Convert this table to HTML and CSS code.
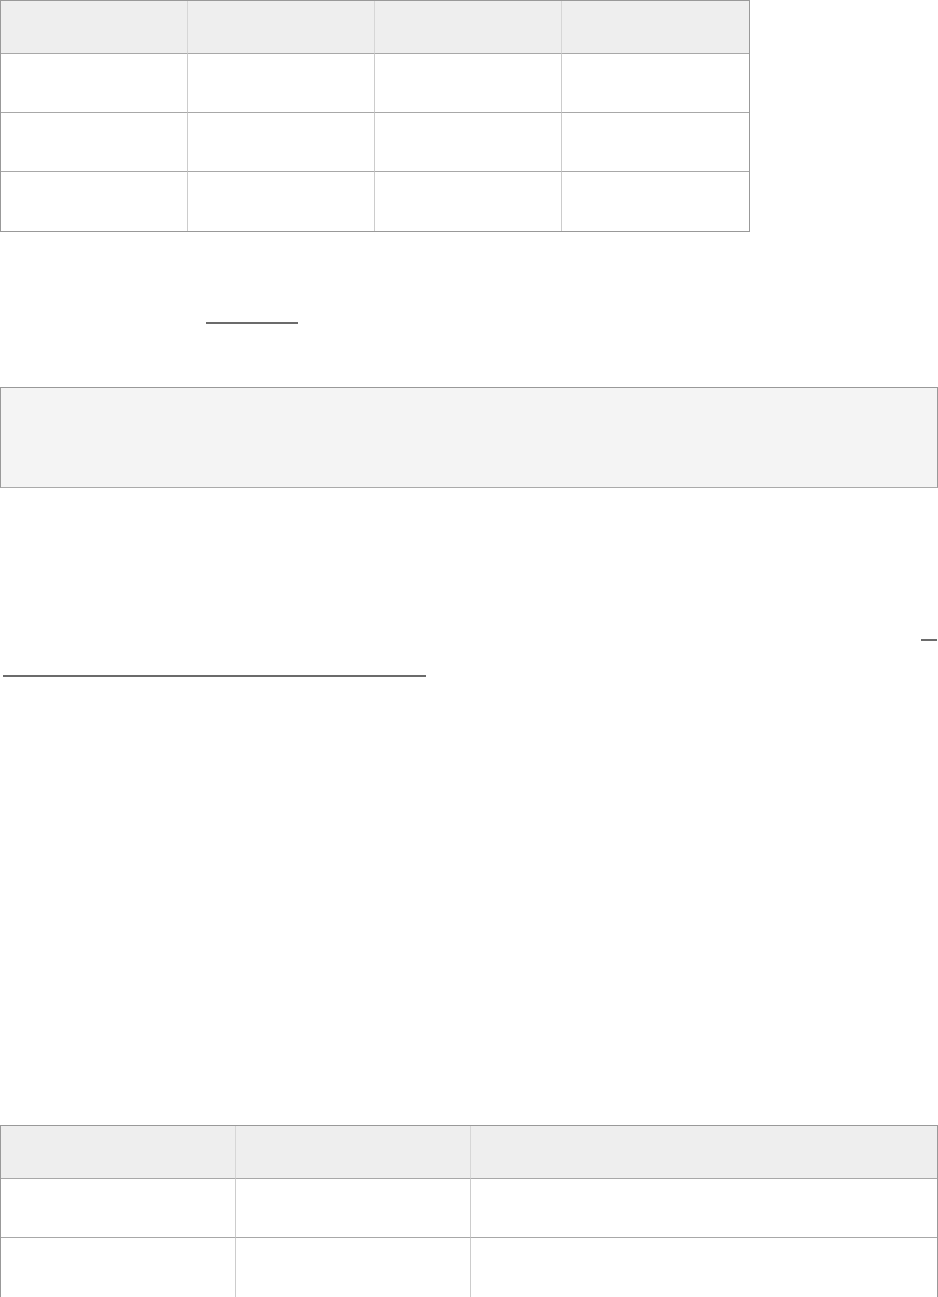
FILE: index.html
```
<!DOCTYPE html>
<html lang="en">
<head>
    <meta charset="UTF-8">
    <meta name="viewport" content="width=device-width, initial-scale=1.0">
    <title>doc</title>
    <link rel="stylesheet" href="styles.css">
</head>
<body>

<!-- first table: 4 columns -->
<table class="grid grid-narrow">
    <tr class="head-row">
        <th></th><th></th><th></th><th></th>
    </tr>
    <tr><td></td><td></td><td></td><td></td></tr>
    <tr><td></td><td></td><td></td><td></td></tr>
    <tr><td></td><td></td><td></td><td></td></tr>
</table>

<div class="para para-first">
    <span class="link-line link-short"></span>
</div>

<pre class="code-box"></pre>

<div class="para para-wrap">
    <div class="link-end"><span class="link-line link-tail"></span></div>
    <div class="link-line link-long"></div>
</div>

<!-- second table: 3 columns, full width -->
<table class="grid grid-wide">
    <tr class="head-row">
        <th></th><th></th><th></th>
    </tr>
    <tr><td></td><td></td><td></td></tr>
    <tr><td></td><td></td><td></td></tr>
</table>

</body>
</html>
```
FILE: styles.css
```
* {
    margin: 0;
    padding: 0;
    box-sizing: border-box;
}

body {
    background: #fff;
    font-family: "Liberation Sans", Arial, sans-serif;
    font-size: 16px;
    color: #333;
}

/* Tables */
.grid {
    border-collapse: separate;
    border-spacing: 0;
    border: 1px solid #999;
    table-layout: fixed;
}

.grid th,
.grid td {
    border-right: 1px solid #ccc;
    border-bottom: 1px solid #a8a8a8;
    padding: 0;
}

.grid th:last-child,
.grid td:last-child {
    border-right: none;
}

.grid tr:last-child td {
    border-bottom: none;
}

.head-row th {
    background: #eee;
    height: 53px;
    border-right-color: #d6d6d6;
}

.grid td {
    height: 59px;
}

.grid-narrow {
    width: 750px;
}

.grid-narrow th,
.grid-narrow td {
    width: 25%;
}

.grid-wide {
    width: 938px;
    margin-top: 448px;
}

.grid-wide th:nth-child(1),
.grid-wide th:nth-child(2) {
    width: 235px;
}

/* Paragraph link underlines */
.para-first {
    padding-top: 90px;
    padding-left: 206px;
    height: 155px;
}

.link-line {
    display: block;
    height: 2px;
    background: #6b6b6b;
}

.link-short {
    width: 92px;
}

/* Code block */
.code-box {
    display: block;
    height: 101px;
    background: #f4f4f4;
    border: 1px solid #999;
    border-bottom-color: #aaa;
}

.para-wrap {
    padding-top: 151px;
}

.link-end {
    display: flex;
    justify-content: flex-end;
    padding-right: 1px;
    height: 36px;
}

.link-tail {
    width: 16px;
}

.link-long {
    width: 423px;
    margin-left: 3px;
}
```
